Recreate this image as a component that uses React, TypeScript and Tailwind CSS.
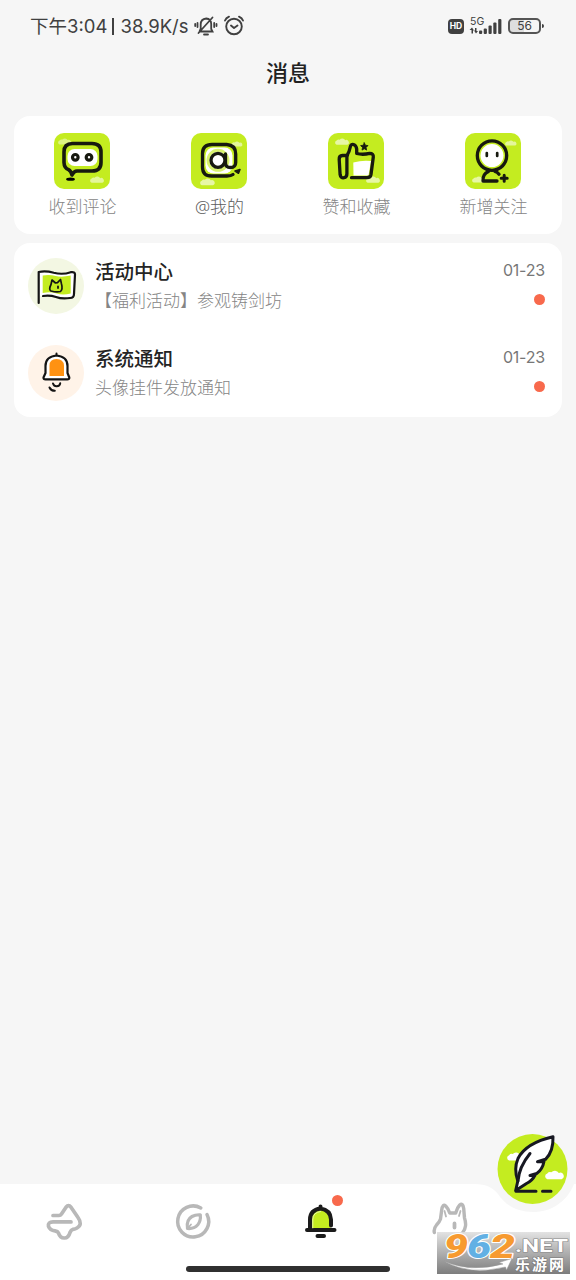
import React from "react";

const shortcuts = [
  { label: "收到评论", icon: <CommentIcon />, color: "text-[#858585]" },
  { label: "@我的", icon: <MentionIcon />, color: "text-[#5c5c5c]" },
  { label: "赞和收藏", icon: <LikeIcon />, color: "text-[#858585]" },
  { label: "新增关注", icon: <FollowIcon />, color: "text-[#858585]" },
];

const messages = [
  { title: "活动中心", preview: "【福利活动】参观铸剑坊", date: "01-23", icon: <FlagIcon /> },
  { title: "系统通知", preview: "头像挂件发放通知", date: "01-23", icon: <NoticeIcon /> },
];

function Cloud({ x, y, scale = 1, opacity = 1 }: { x: number; y: number; scale?: number; opacity?: number }) {
  return (
    <path
      transform={`translate(${x} ${y}) scale(${scale})`}
      opacity={opacity}
      fill="#fff"
      stroke="none"
      d="M2 8a2.6 2.6 0 0 1 0-5 3 3 0 0 1 3.5-1A4 4 0 0 1 12 2.5 2.8 2.8 0 0 1 14.5 8Z"
    />
  );
}

function Tile({ children }: { children: React.ReactNode }) {
  return (
    <svg className="-ml-px h-14 w-14" viewBox="0 0 56 56" fill="none" stroke="#17190f" strokeWidth="3.3" strokeLinecap="round" strokeLinejoin="round">
      <rect width="56" height="56" rx="10" fill="#c4ec20" stroke="none" />
      {children}
    </svg>
  );
}

function CommentIcon() {
  return (
    <Tile>
      <Cloud x={4} y={5} scale={0.8} opacity={0.45} />
      <Cloud x={36} y={43} scale={0.85} opacity={0.55} />
      <rect x="13.5" y="16" width="30" height="17" rx="7" fill="#fff" stroke="none" />
      <path d="M18.5 10.5H38q9 0 9 8.5v10.500q0 8.500-9 8.500H23q-3 0-5 4-1-4-3.500-5.300Q10.200 35 10 29.500V19q0-8.500 8.500-8.500Z" strokeWidth="3.6" />
      <ellipse cx="16.5" cy="46.2" rx="4.4" ry="1.6" fill="#000" stroke="none" />
      <circle cx="21.3" cy="24.3" r="2.8" strokeWidth="3.2" />
      <circle cx="35" cy="24.3" r="2.8" strokeWidth="3.2" />
    </Tile>
  );
}

function MentionIcon() {
  return (
    <Tile>
      <Cloud x={40} y={8} scale={0.7} opacity={0.55} />
      <Cloud x={9} y={45} scale={0.9} opacity={0.6} />
      <rect x="14.5" y="14.5" width="27" height="26" rx="8" fill="#fff" stroke="none" />
      <circle cx="27" cy="27.3" r="10" stroke="#d9f36e" strokeWidth="3" />
      <circle cx="27" cy="27.3" r="7" fill="#fff" />
      <path d="M34.5 21v9q0 4.5 5 4.5 5.2 0 5.2-5V21q0-9-9-9.500H21q-9.500 0-9.500 9v13.500q0 9 9 9H36q4 0 6-1.500" />
      <path d="m44 38 5-1.5-1.5 3.800Z" fill="#17190f" strokeWidth="1.5" />
    </Tile>
  );
}

function LikeIcon() {
  return (
    <Tile>
      <Cloud x={7} y={5} scale={0.85} opacity={0.6} />
      <Cloud x={38} y={43} scale={0.85} opacity={0.6} />
      <path d="M25.300 29.500Q34 27 43 28l-2.500 14.500h-15Z" fill="#fff" stroke="none" />
      <path d="M19.500 22.500h-5q-3.500.2-3.300 4l.9 15q.5 3.800 4 3.200 2.800-.5 2.800-4v-18q2.500-4 3.300-8.500.8-3.500 3.300-2.700 2.700.8 3.200 4.500v4.500q6 1.500 13-.1 4 0 3.600 3.600l-2.300 17.500q-.5 3.200-4 3.200H23.500" />
      <path d="m36.300 9.800 1.100 2.400 2.600.4-1.900 1.900.5 2.600-2.300-1.300-2.300 1.300.5-2.600-1.900-1.900 2.600-.4Z" fill="#17190f" strokeWidth="0.8" />
    </Tile>
  );
}

function FollowIcon() {
  return (
    <Tile>
      <Cloud x={40} y={7} scale={0.7} opacity={0.55} />
      <Cloud x={7} y={43} scale={0.8} opacity={0.6} />
      <circle cx="27" cy="22.6" r="14.7" fill="#c4ec20" />
      <circle cx="27" cy="22.6" r="11.5" fill="#fff" stroke="none" />
      <path d="M21.800 20v3M32.200 20v3" strokeWidth="2.7" />
      <path d="M23.500 38.500q-6 2.500-5.500 9.500h14M30 38.500q2.500.8 4 2.700" />
      <path d="M39.200 42.200v6M36.200 45.200h6" strokeWidth="3" />
    </Tile>
  );
}

function FlagIcon() {
  return (
    <svg className="h-14 w-14 shrink-0" viewBox="0 0 56 56" fill="none" stroke="#141414" strokeWidth="2.2" strokeLinecap="round" strokeLinejoin="round">
      <circle cx="28" cy="28" r="28" fill="#f3f7e3" stroke="none" />
      <path d="M10.700 14q8-1.200 16 1t20-1V38q-9 4-18 1.500-9-3-18-1Z" fill="#fff" stroke="none" />
      <path d="M14.700 17.500q7-1 13 .5t15-.5v18q-8 2-14 0t-14-.5Z" fill="#c4ec20" stroke="none" />
      <path d="M10.700 45V14q7-1.500 15 .8 9 2.200 17-.6 4.500-.7 4.300 2.300L46 36q0 4-4 4-8 1.300-14-1-6-2-13-1" />
      <path d="m23 26.500 1-4.500 3.500 3 2-.3 3-3.200 1 4.500q1.500 5-1 7.500-4 1-9.500-.5-2.500-1.500 0-6.500Z" strokeWidth="1.700" />
      <path d="M30 28.500v1.500" strokeWidth="1.800" />
    </svg>
  );
}

function NoticeIcon() {
  return (
    <svg className="h-14 w-14 shrink-0" viewBox="0 0 56 56" fill="none" stroke="#141414" strokeWidth="2.2" strokeLinecap="round" strokeLinejoin="round">
      <circle cx="28" cy="28" r="28" fill="#fff3e8" stroke="none" />
      <path d="M17.500 28v-7q0-9.500 11-10.500 11 1 11 10.500v7l1.800 4.500q.2 1.800-2 1.800H17.500q-2.300 0-2-1.800Z" fill="#fff" />
      <path d="M21.500 31V20.500q0-6.500 7-6.500t7.500 6.500V31Z" fill="#ff9212" stroke="none" />
      <path d="M28.500 10V8.500M25 38.500q1 3 3.800 2.800 3-.2 3.400-3M21.500 42.500q1.500 3.300 5.300 3.300" strokeWidth="2" />
    </svg>
  );
}

function StatusBar() {
  return (
    <div className="flex h-[52px] items-center justify-between pl-[30px] pr-[32px] text-[#404040]">
      <div className="flex items-center">
        <div className="flex w-[164px] items-center whitespace-nowrap font-['Inter','Noto_Sans_CJK_SC',sans-serif] text-[18.5px] leading-6">
          <span className="w-[82px]">下午3:04</span>
          <span className="mr-[7px] h-[17px] w-[1.5px] bg-[#404040]" />
          <span>38.9K/s</span>
        </div>
        <svg className="h-6 w-6" viewBox="0 0 24 24" fill="none" stroke="currentColor" strokeWidth="1.800" strokeLinecap="round">
          <path d="M6.500 17.500h12l-1.300-2.500V10q0-5-5-5.500-5.500.5-5.500 6v4l-1.200 3M18.500 3.500l-14 15.500M10 20.500h4M3.500 9v4M1.200 10v2M20.200 9v4M22.500 10v2" />
        </svg>
        <svg className="ml-1 h-6 w-6" viewBox="0 0 24 24" fill="none" stroke="currentColor" strokeWidth="1.900" strokeLinecap="round" strokeLinejoin="round">
          <circle cx="12" cy="12.500" r="7.800" />
          <path d="m9 11.500 3 2.500 3.500-2.500M3 6.500q1-2.500 4-3.800M21 6.500q-1-2.500-4-3.800" />
        </svg>
      </div>
      <div className="flex items-center">
        <span className="flex h-[15px] w-4 items-center justify-center rounded-[4px] bg-[#404040] font-[Inter] text-[8.5px] font-bold text-white">HD</span>
        <svg className="ml-[5px] h-[22px] w-[34px]" viewBox="0 0 34 22" fill="currentColor">
          <text x="1" y="10" fontSize="10.500" fontFamily="Inter, sans-serif">5G</text>
          <path d="m3 12.500 2 3H4v3H2.500V15H.5Zm4 6-2-3h1v-2.500h1.500V16H9Z" />
          <rect x="10" y="15.500" width="3.200" height="3.500" rx="1" />
          <rect x="14.700" y="13.500" width="3.200" height="5.500" rx="1" />
          <rect x="19.500" y="10.500" width="3.200" height="8.500" rx="1" />
          <rect x="24.300" y="7.500" width="3.200" height="11.500" rx="1" />
          <rect x="29.200" y="4" width="3.200" height="15" rx="1" />
        </svg>
        <div className="ml-[5px] flex items-center gap-px">
          <span className="flex h-4 w-[33px] items-center justify-center rounded-[5px] border-2 border-[#555] bg-linear-to-r from-[#dedede] from-50% to-transparent to-50% font-[Inter] text-[12px] leading-none">56</span>
          <span className="h-1 w-0.5 rounded-r bg-[#404040]" />
        </div>
      </div>
    </div>
  );
}

function TabBar() {
  return (
    <nav className="relative h-24">
      <svg className="absolute inset-0 h-24 w-[576px]" viewBox="0 0 576 96">
        <path fill="#fff" d="M0 0h474c13 0 19 4 24 10 7 11 19 18 35 18 18 0 34-10 41-28h2v96H0Z" />
      </svg>
      <div className="relative grid w-[514px] grid-cols-4 justify-items-center pt-[18px]">
        <svg className="h-10 w-10" viewBox="0 0 40 40" fill="none" stroke="#b8b8b8" strokeWidth="3.700" strokeLinecap="round" strokeLinejoin="round">
          <path d="M9 12.500H15q1.500 0 2.500-1.500l4.500-6.800q2.500-3 5 0L34 14.500q5 7-1 10.500-1.500 1-4 1.300-2 .5-3 3.200-1.500 5.500-5.500 5.500-4.500.2-6-5-.8-1.800-3.500-2.200-5-.5-6.500-4.500-.8-4.300 4.500-4.400h18" transform="translate(0 1)" />
        </svg>
        <svg className="h-10 w-10" viewBox="0 0 40 40" fill="none" stroke="#b8b8b8" strokeWidth="3.500" strokeLinecap="round" strokeLinejoin="round">
          <path d="M27.800 6A15.500 15.500 0 1 0 34 12.500" />
          <path d="M14.500 26.500Q13 18 19 14.500q3.500-2 8.300-1.700.7 6-2.500 10-3.800 4.300-10.300 3.700Z" strokeWidth="3.200" />
          <path d="m15 26 3-3.500" strokeWidth="1.800" />
        </svg>
        <div className="relative -left-px">
          <svg className="h-10 w-10" viewBox="0 0 40 40" fill="none" stroke="#1b1b1b" strokeWidth="4" strokeLinecap="round" strokeLinejoin="round">
            <path d="M10.500 27V17q.5-9.500 10-10.500 9.500 1 10 10.500v11H10.500Z" fill="#c4ec20" stroke="none" />
            <path d="M7 28h27.500M10 27V17.500q0-9.500 10.500-11 10 1.500 10.500 11V23.500M20.500 6V4.500M17.500 34H24" />
            <path d="M12.800 26V17.500q0-7 7.700-8" stroke="#fff" strokeWidth="1" opacity="0.6" />
          </svg>
          <span className="absolute -top-[7px] left-[32px] h-[11px] w-[11px] rounded-full bg-[#f8694c]" />
        </div>
        <svg className="h-10 w-10" viewBox="0 0 40 40" fill="none" stroke="#b8b8b8" strokeWidth="3.400" strokeLinecap="round" strokeLinejoin="round">
          <path d="M4.300 30.500q-.8-4 2.200-7.500 3-3 4-6l1.200-9q1-6.500 4-4 2.300 2.200 4 7h6q1.500-5.500 4-8 3-2.500 4 3.500l.8 9.500q1.500 4.500 1 8-.5 3.500-2.500 6" />
          <path d="m14.500 9 1.500 5.500M30.500 9l-1.500 5" strokeWidth="1.800" />
          <rect x="23.500" y="20.500" width="2" height="6" rx="1" strokeWidth="1.800" fill="#b8b8b8" />
        </svg>
      </div>
      <div className="absolute bottom-2 left-[186px] h-[6px] w-[204px] rounded-full bg-[#303030]" />
      <button className="absolute left-[497px] -top-[53px] h-[74px] w-[74px]" aria-label="发布">
        <svg className="h-full w-full" viewBox="0 0 74 74" fill="none" stroke="#171822" strokeWidth="3" strokeLinecap="round" strokeLinejoin="round">
          <circle cx="35.500" cy="38" r="35" fill="#c4ec20" stroke="none" />
          <Cloud x={10} y={21} scale={1.050} />
          <Cloud x={48} y={39} scale={1.150} />
          <path d="M18.700 59.500 20.800 50Q16.500 38 21 27.500 29 12 56 5.800q.5 15-7.500 22.500l-8 2.500 6.500-.3q-1.500 8-7.300 12L33 44.500l5-.2q-3 5.700-8.500 8.200Z" fill="#fff" />
          <path d="M33 22.500Q22 36 21 50" />
          <path d="M19 60.200h20M45.500 60.200H54" />
        </svg>
      </button>
    </nav>
  );
}

function Watermark() {
  return (
    <div className="absolute left-[437px] top-[1232px] h-[42px] w-[133px] bg-linear-to-b from-[#dedede]/85 to-[#7d7d7d]">
      <svg className="h-full w-full overflow-visible" viewBox="0 0 133 42" fontFamily="Roboto, sans-serif" fontWeight="900" strokeLinejoin="round">
        <g fontSize="33" fontStyle="italic" stroke="#fff" strokeWidth="2" paintOrder="stroke">
          <text x="7" y="25.500" textLength="24" lengthAdjust="spacingAndGlyphs" fill="#f79a30">9</text>
          <text x="30" y="25.500" textLength="24" lengthAdjust="spacingAndGlyphs" fill="#62b0e4">6</text>
          <text x="53" y="25.500" textLength="25" lengthAdjust="spacingAndGlyphs" fill="#f79a30">2</text>
        </g>
        <text x="78" y="20" fontSize="18" fontWeight="700" textLength="53" lengthAdjust="spacingAndGlyphs" fill="#fff" stroke="#888" strokeWidth="1.200" paintOrder="stroke">.NET</text>
        <path d="M7 29q26 12 59 3l-4-1.500 13-4-5.500 11.500-1-3Q32 44 7 29Z" fill="#fff" stroke="#999" strokeWidth="0.500" />
        <text x="78" y="37.500" fontSize="15" fontWeight="700" textLength="49" fontFamily="'Noto Sans CJK SC', sans-serif" fill="#fff" stroke="#777" strokeWidth="1.200" paintOrder="stroke">乐游网</text>
      </svg>
    </div>
  );
}

export default function App() {
  return (
    <div className="relative flex h-[1280px] w-[576px] flex-col overflow-hidden bg-[#f6f6f6] font-['Noto_Sans','Noto_Sans_CJK_SC',sans-serif]">
      <StatusBar />
      <header className="flex h-[64px] justify-center pt-[5px]">
        <h1 className="text-[22px] font-medium leading-[30px] text-[#222]">消息</h1>
      </header>

      <main className="mx-[14px] flex flex-1 flex-col gap-[9px]">
        <section className="grid h-[118px] grid-cols-4 rounded-[16px] bg-white pt-[17px]">
          {shortcuts.map((item) => (
            <div key={item.label} className="flex flex-col items-center gap-[6px]">
              {item.icon}
              <span className={`text-[17px] font-light leading-6 ${item.color}`}>{item.label}</span>
            </div>
          ))}
        </section>

        <section className="h-[174px] rounded-[16px] bg-white">
          {messages.map((msg) => (
            <div key={msg.title} className="flex h-[87px] pl-[14px] pr-[17px] pt-[15px]">
              {msg.icon}
              <div className="ml-[11px] flex flex-1 flex-col">
                <h2 className="text-[19.5px] font-medium leading-[27px] text-[#242424]">{msg.title}</h2>
                <p className="mt-[4px] text-[17px] font-light leading-6 text-[#858585]">{msg.preview}</p>
              </div>
              <div className="flex flex-col items-end">
                <time className="font-[Inter] text-[16px] leading-6 tracking-[-0.2px] text-[#777]">{msg.date}</time>
                <span className="mt-[12px] h-[11px] w-[11px] rounded-full bg-[#f8694c]" />
              </div>
            </div>
          ))}
        </section>
      </main>

      <TabBar />
      <Watermark />
    </div>
  );
}
